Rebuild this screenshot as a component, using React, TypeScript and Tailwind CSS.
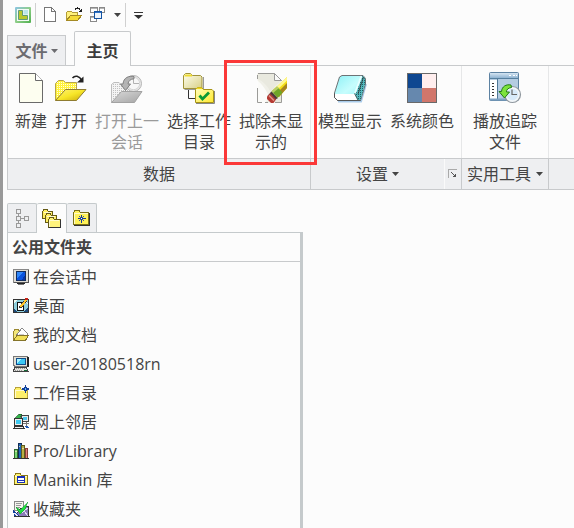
import { useState, type ReactNode } from 'react';

function Caret() {
  return (
    <svg viewBox="0 0 7 4" className="w-[7px] h-1 shrink-0" aria-hidden="true">
      <path d="M0 0H7L3.5 4Z" fill="currentColor" />
    </svg>
  );
}

function Icon32({ children }: { children: ReactNode }) {
  return <svg viewBox="0 0 32 32" className="w-8 h-8 shrink-0 overflow-visible" aria-hidden="true">{children}</svg>;
}

function Icon16({ children }: { children: ReactNode }) {
  return (
    <svg viewBox="0 0 16 16" className="w-4 h-4 shrink-0 overflow-visible" shapeRendering="crispEdges" aria-hidden="true">
      {children}
    </svg>
  );
}

/* ---- ribbon icons ---- */

const NewIcon = () => (
  <Icon32>
    <path d="M4.5 1.5H20.5L27.5 8.5V30.5H4.5Z" fill="#fdfef0" stroke="#6a6a6a" />
    <path d="M20.5 1.5V8.5H27.5" fill="#fff" stroke="#6a6a6a" />
  </Icon32>
);

const OpenIcon = () => (
  <Icon32>
    <defs>
      <linearGradient id="openFront" x1="0" y1="0" x2="1" y2="1">
        <stop offset="0" stopColor="#fff27a" />
        <stop offset="0.5" stopColor="#f7e628" />
        <stop offset="1" stopColor="#c9a80c" />
      </linearGradient>
      <pattern id="openDots" width="2" height="2" patternUnits="userSpaceOnUse">
        <rect width="2" height="2" fill="#fff23c" />
        <rect width="1" height="1" fill="#fffde0" />
      </pattern>
    </defs>
    <path d="M0.5 28.5V11.5L3.5 8.5H8.5L10.5 10.5H21.5V17" fill="url(#openDots)" stroke="#b5a44a" />
    <path d="M0.5 28.5L10.5 17.5H31L21.5 28.5Z" fill="url(#openFront)" stroke="#8f7c30" />
    <path d="M17.5 6C20 3 24 3.5 27 8.5" fill="none" stroke="#222" strokeWidth="1.5" />
    <path d="M28.5 4.5V10.5H22Z" fill="#222" />
  </Icon32>
);

const OpenLastIcon = () => (
  <Icon32>
    <defs>
      <linearGradient id="lastFront" x1="0" y1="0" x2="1" y2="1">
        <stop offset="0" stopColor="#d8d8d8" />
        <stop offset="1" stopColor="#a5a5a5" />
      </linearGradient>
      <pattern id="lastDots" width="2" height="2" patternUnits="userSpaceOnUse">
        <rect width="2" height="2" fill="#f4f4f4" />
        <rect width="1" height="1" fill="#c0c0c0" />
      </pattern>
    </defs>
    <path d="M0.5 30.5V12.5L3 10.5H8L10 12.5H22V20" fill="url(#lastDots)" stroke="#bdbdbd" />
    <circle cx="22.5" cy="11.5" r="8" fill="#e8e8e8" stroke="#b4b4b4" />
    <circle cx="22.5" cy="11.5" r="6.2" fill="#f7f7f7" stroke="#d4d4d4" />
    <path d="M22.5 6V11.5H28" fill="none" stroke="#b2b2b2" />
    <path d="M0.5 30.5L10.5 19.5H31L23.5 30.5Z" fill="url(#lastFront)" stroke="#a2a2a2" />
    <path d="M23 4.5C18 3.5 12.5 5.5 12 12H9.5L14.5 18.5L19.5 12H17C17.2 9 19.5 7 23 6.8Z" fill="#b4b4b4" stroke="#7f7f7f" />
  </Icon32>
);

const WorkDirIcon = () => (
  <Icon32>
    <defs>
      <linearGradient id="wdA" x1="0" y1="0" x2="1" y2="1">
        <stop offset="0" stopColor="#fffff0" />
        <stop offset="1" stopColor="#d8cf86" />
      </linearGradient>
      <linearGradient id="wdB" x1="0" y1="0" x2="1" y2="1">
        <stop offset="0" stopColor="#ffffc0" />
        <stop offset="1" stopColor="#ffe92e" />
      </linearGradient>
    </defs>
    <path d="M5.5 17V26.5H13" fill="none" stroke="#333" />
    <path d="M1.5 17.5H20.5V5" fill="none" stroke="#999" />
    <path d="M0.5 16.5V3.5L2.5 1.5H7.5L9.5 3.5H17.5L19 5V16.5Z" fill="url(#wdA)" stroke="#a0933a" />
    <path d="M1.5 3.5H9" stroke="#eedb30" strokeWidth="2" />
    <path d="M13 31.5H31.5V19" fill="none" stroke="#888" />
    <path d="M12.5 30.5V17.5L14.5 15.5H18.5L20.5 17.5H29L30.5 19V30.5Z" fill="url(#wdB)" stroke="#a79416" />
    <path d="M14.5 15.5H18.5L19.5 17H13Z" fill="#f2d81e" />
    <path d="M16.5 23.5L19.5 27L26 20.5" fill="none" stroke="#0b9a34" strokeWidth="2.8" />
  </Icon32>
);

const EraseIcon = () => (
  <Icon32>
    <path d="M2.5 1.5H19.5L26.5 8.5V30.5H2.5Z" fill="#f0f0e8" />
    <path d="M2.5 1.5V7C9 9 15 17 17 24L12 30.5H26.5V22L19 15L26 9V8.5L19.5 1.5Z" fill="#e9e9df" />
    <path d="M2 8C7 12 12 19 14 25L10 31H2Z" fill="#fff" opacity=".75" />
    <path d="M3 1.5H19.5L26.5 8.5M2.5 3V7M2.5 16V30.5H7M10 30.5H13M26.5 21V30.5H20" fill="none" stroke="#9b9b98" />
    <path d="M19.5 1.5V8.5H26.5Z" fill="#fafafa" stroke="#999" />
    <path d="M32 5L17 19L24 25L32 16Z" fill="#f5df18" />
    <path d="M32 5L17 19L19 20.7L32 8.5Z" fill="#fff890" />
    <path d="M32 11L21 22L24 25L32 16Z" fill="#a8851e" />
    <path d="M22 14.5L16.5 19.5L22.5 26L27.5 20.5Z" fill="#70a628" />
    <path d="M22 14.5L16.5 19.5L18 21L24 16Z" fill="#b9ce66" />
    <path d="M16.5 19.5L12.5 24L18 30L22.5 26Z" fill="#4d4444" />
    <path d="M15 21.5L12 24.5V27L16 31H18.5L21 27.5Z" fill="#b53a32" />
    <path d="M14 23.5L19 28.5" stroke="#e0978c" strokeWidth="1.5" />
    <path d="M16 20.5L22 26.5" stroke="#572828" />
  </Icon32>
);

const ModelIcon = () => (
  <Icon32>
    <defs>
      <linearGradient id="mdTop" x1="0" y1="0" x2="1" y2="1">
        <stop offset="0" stopColor="#8df1f6" />
        <stop offset="0.5" stopColor="#c6fdfd" />
        <stop offset="1" stopColor="#8ff4f8" />
      </linearGradient>
      <pattern id="mdSide" width="2" height="2" patternUnits="userSpaceOnUse">
        <rect width="2" height="2" fill="#55b9bd" />
        <rect width="1" height="1" fill="#1c6067" />
      </pattern>
    </defs>
    <path d="M4 29.5H27L32 12" fill="none" stroke="#a9cbea" strokeWidth="2" />
    <path d="M5.5 5L8 3.5H29L31.5 6.5V12L26.5 28.5H3.5L0.5 25.5V21Z" fill="url(#mdTop)" stroke="#6d7376" />
    <path d="M1 22H20.5L23 28H3.5L1 25.5Z" fill="#fff" />
    <path d="M27.5 4L21 21L24 28H26.5L31 12V6.5L29 4Z" fill="url(#mdSide)" />
    <path d="M27.5 4L21 21" stroke="#e6ffff" strokeWidth="2" />
    <path d="M20.5 21.5L24 28M29.5 5L24 22" stroke="#333" strokeWidth=".8" />
    <path d="M0.5 21.5V25.5L3.5 28.5H26.5" fill="none" stroke="#555" />
  </Icon32>
);

const ColorsIcon = () => (
  <Icon32>
    <rect x="1" y="1" width="30" height="30" fill="#696969" />
    <rect x="2" y="2" width="14" height="14" fill="#0e4791" />
    <rect x="16" y="2" width="14" height="14" fill="#ffeeee" />
    <rect x="2" y="16" width="14" height="14" fill="#6688ae" />
    <rect x="16" y="16" width="14" height="14" fill="#d1766b" />
  </Icon32>
);

const PlaybackIcon = () => (
  <Icon32>
    <defs>
      <linearGradient id="pbTop" x1="0" y1="0" x2="0" y2="1">
        <stop offset="0" stopColor="#d5e5f2" />
        <stop offset="1" stopColor="#8fb3d2" />
      </linearGradient>
    </defs>
    <rect x="0.5" y="0.5" width="29" height="28" rx="1" fill="#b4cce2" stroke="#5d82a2" />
    <rect x="1" y="1" width="28" height="5" fill="url(#pbTop)" />
    <path d="M1 6.5H29" stroke="#56809f" />
    <path d="M20 3.5H22M24 3.5H26M27 3.5H28" stroke="#fff" />
    <rect x="1" y="8" width="7" height="19" fill="#fff" />
    <path d="M8.5 7V28" stroke="#507897" />
    <path d="M3 11.5H6M3 14.5H6M3 17.5H6M3 20.5H6M3 23.5H6" stroke="#333" strokeDasharray="2 1" />
    <path d="M1 27.5H29" stroke="#7fa2c2" strokeWidth="2" />
    <circle cx="23.5" cy="22.5" r="8" fill="#f2f6f9" stroke="#8f979e" strokeWidth="1.2" />
    <circle cx="23.5" cy="22.5" r="5.8" fill="#d7eafa" />
    <path d="M23 17.5V22.5H28" fill="none" stroke="#666" strokeWidth="1.2" />
    <path d="M22 13C17 12 13 14.5 12.5 19.5H10L15.5 26L20.5 20H17.5C17.5 17.5 19 16 22.5 15.5Z" fill="#7ce33c" stroke="#237a18" />
  </Icon32>
);

/* ---- quick access icons ---- */

const LogoIcon = () => (
  <svg viewBox="0 0 17 17" className="w-[17px] h-[17px]" aria-hidden="true">
    <defs>
      <linearGradient id="logoEdge" x1="0" y1="0" x2="1" y2="1">
        <stop offset="0" stopColor="#8cc4e6" />
        <stop offset="0.5" stopColor="#8fce88" />
        <stop offset="1" stopColor="#4fb04f" />
      </linearGradient>
    </defs>
    <rect x="1" width="16" height="16" rx="1" fill="url(#logoEdge)" />
    <rect x="3" y="2" width="12" height="12" fill="#f4fbf6" />
    <path d="M4.5 3.5H8.5V8.5H13.5V12.5H4.5Z" fill="#b9c92c" stroke="#5f9a78" />
    <rect x="9.5" y="3" width="4.5" height="4.5" fill="#b9e6ea" />
  </svg>
);

const SmallDocIcon = () => (
  <Icon16>
    <path d="M2.5 0.5H9.5L13.5 4.5V14.5H2.5Z" fill="#fff" stroke="#777" />
    <path d="M9.5 0.5V4.5H13.5" fill="none" stroke="#777" />
  </Icon16>
);

const SmallOpenIcon = () => (
  <Icon16>
    <path d="M0.5 13.5V5.5L2 4.5H5L6.5 5.5H11.5V8" fill="#fff17c" stroke="#b39c36" />
    <path d="M0.5 13.5L4.5 8.5H15.5L11.5 13.5Z" fill="#f5db37" stroke="#a58a24" />
    <path d="M9 2.5C11 0 13 1 14.5 3.5" fill="none" stroke="#222" strokeWidth="1.2" />
    <path d="M16 1V5H12Z" fill="#222" />
  </Icon16>
);

const WindowsIcon = () => (
  <Icon16>
    <g fill="#fff" stroke="#8a8a8a">
      <rect x="0.5" y="0.5" width="7" height="5" />
      <rect x="9.5" y="0.5" width="5" height="5" />
      <rect x="0.5" y="9.5" width="6" height="5" />
    </g>
    <path d="M1 1.5H7M10 1.5H14M1 10.5H6" stroke="#b5b5b5" />
    <rect x="4.5" y="4.5" width="7" height="7" fill="#eef5fd" stroke="#1554a3" />
    <path d="M5 5.5H11" stroke="#2f74c8" />
  </Icon16>
);

/* ---- navigator icons ---- */

const TreeIcon = () => (
  <svg viewBox="0 0 14 20" className="w-3.5 h-5" shapeRendering="crispEdges" aria-hidden="true">
    <g fill="none" stroke="#999">
      <rect x="1.5" y="1.5" width="4" height="4" />
      <rect x="1.5" y="8.5" width="4" height="4" />
      <rect x="9.5" y="8.5" width="4" height="4" />
      <rect x="1.5" y="15.5" width="4" height="4" />
      <path d="M3.5 6V8M3.5 13V15M6 10.5H9" />
    </g>
  </svg>
);

const FoldersIcon = () => (
  <svg viewBox="0 0 19 19" className="w-[19px] h-[19px]" shapeRendering="crispEdges" aria-hidden="true">
    <g fill="#ffef61" stroke="#665b16">
      <path d="M0.5 9.5V2.5L2 0.5H5L6.5 2.5H10.5V9.5Z" />
      <path d="M3.5 13.5V6.5L5 4.5H8L9.5 6.5H14.5V13.5Z" />
      <path d="M6.5 18.5V10.5L8 8.5H11L12.5 10.5H18V18.5Z" fill="#fff37c" />
    </g>
    <path d="M2 3.5H9M5 7.5H13M8 11.5H17M7.5 11V18" stroke="#fffbd0" />
    <path d="M18.5 11V18.5H7" fill="none" stroke="#333" />
  </svg>
);

const FavFolderIcon = () => (
  <svg viewBox="0 0 17 16" className="w-[17px] h-4" shapeRendering="crispEdges" aria-hidden="true">
    <path d="M0.5 14.5V2.5L2 0.5H6L7.5 2.5H15.5V14.5Z" fill="#fff259" stroke="#7c7116" />
    <path d="M1 3.5H15M1.5 4V14" stroke="#fffbc8" />
    <path d="M16.5 3V15.5H1" fill="none" stroke="#333" />
    <path d="M8.5 5V13M4.5 8.5H12.5" stroke="#123a9c" />
    <path d="M6 6L11 11M11 6L6 11" stroke="#123a9c" strokeWidth=".8" />
    <rect x="8" y="8" width="1" height="1" fill="#fff" />
  </svg>
);

const MonitorIcon = () => (
  <Icon16>
    <rect x="0.5" y="0.5" width="15" height="13" fill="#dedcd6" stroke="#888" />
    <path d="M15.5 1V13.5H1" fill="none" stroke="#555" />
    <rect x="3.5" y="2.5" width="9" height="9" fill="#0a54df" stroke="#142d5c" />
    <path d="M4 3H10L4 10Z" fill="#2f86fa" />
    <path d="M9 11L12 6V11Z" fill="#0735a6" />
    <path d="M4 14.5H12" stroke="#222" />
    <path d="M5 15.5H11" stroke="#777" />
  </Icon16>
);

const DesktopIcon = () => (
  <Icon16>
    <rect x="0.5" y="1.5" width="15" height="13" fill="#8fcfdd" stroke="#333" />
    <path d="M1 2H4L1 6ZM10 2H14L15 7Z" fill="#f2fbf4" />
    <path d="M11 14L15 9V14ZM1 11L4 14H1Z" fill="#1d4a7c" />
    <path d="M4.5 4.5H9.5L10.5 7.5V12.5H4.5Z" fill="#fff" stroke="#111" />
    <path d="M7 10L13 2" stroke="#333" strokeWidth="3" />
    <path d="M7.5 9L13 2" stroke="#ffc629" strokeWidth="2" />
    <rect x="12" y="0" width="3" height="2" fill="#c42418" />
  </Icon16>
);

const DocumentsIcon = () => (
  <Icon16>
    <path d="M0.5 13.5V4.5L2 2.5H5L6.5 4.5H12.5V8" fill="#f3e779" stroke="#9b8830" />
    <path d="M3 9L9 1L15 7L12 12Z" fill="#fff" stroke="#888" />
    <path d="M6 7H11M6 9H12" stroke="#ccc" />
    <path d="M0.5 13.5L4 8.5H15.5L12.5 13.5Z" fill="#f1df56" stroke="#85742a" />
  </Icon16>
);

const ComputerIcon = () => (
  <Icon16>
    <path d="M1 0.5H14L15.5 2V10.5H2L0.5 9Z" fill="#e2dfd4" stroke="#777" />
    <path d="M14.5 1V11" stroke="#222" strokeWidth="2" />
    <rect x="3.5" y="2.5" width="9" height="6" fill="#3cc8f4" stroke="#134c8a" />
    <path d="M4 3H8L4 7Z" fill="#a8f3ff" />
    <path d="M1.5 11.5H13L15.5 15.5H0.5Z" fill="#e4e4de" stroke="#444" />
    <path d="M3 12.5H12M2 14.5H9" stroke="#999" strokeDasharray="1 1" />
    <path d="M11 14.5H14" stroke="#116b35" />
  </Icon16>
);

const WorkFolderIcon = () => (
  <Icon16>
    <path d="M1.5 13.5V4.5L3 2.5H7L8.5 4.5H14.5V13.5Z" fill="#fff06b" stroke="#b8a23a" />
    <path d="M2 5.5H14M2.5 6V13" stroke="#fffbd1" />
    <path d="M1 13.5H15" stroke="#554b18" />
    <path d="M12.5 0L14 2.5L16.5 4L14 5.5L12.5 8L11 5.5L8.5 4L11 2.5Z" fill="#143e9a" />
    <rect x="12" y="3" width="1" height="2" fill="#64c9ff" />
  </Icon16>
);

const NetworkIcon = () => (
  <Icon16>
    <path d="M2 4L6 0H9L7 4L4 5Z" fill="#35b34a" stroke="#145724" strokeWidth=".7" />
    <rect x="8.5" y="1.5" width="7" height="6" fill="#e8e8e8" stroke="#444" />
    <rect x="10" y="3" width="4" height="3" fill="#4cc6ee" />
    <rect x="1.5" y="4.5" width="8" height="7" fill="#ededea" stroke="#333" />
    <rect x="3" y="6" width="5" height="4" fill="#3cc8f0" />
    <path d="M10 9.5H16M13 8V12" stroke="#777" />
    <path d="M0.5 14.5L2 12.5H10L11.5 14.5Z" fill="#eee" stroke="#333" />
    <path d="M12 12.5H15M13 13.5H16" stroke="#1c55b2" />
  </Icon16>
);

const LibraryIcon = () => (
  <Icon16>
    <rect x="1.5" y="6.5" width="3" height="9" fill="#7cd873" stroke="#2f6a2e" />
    <rect x="5" y="0.5" width="3" height="15" fill="#1f67b8" stroke="#132c55" />
    <rect x="8.5" y="2.5" width="3" height="13" fill="#b8b046" stroke="#5e5c1e" />
    <rect x="12.5" y="5.5" width="2" height="10" fill="#e08377" stroke="#8a4038" />
    <path d="M2 8H4M9 5H11M6 3H7" stroke="#e8dfb5" strokeWidth=".8" />
    <path d="M0 15.5H16" stroke="#333" />
  </Icon16>
);

const ManikinIcon = () => (
  <Icon16>
    <path d="M1.5 12.5V3.5L3 1.5H7L8.5 3.5H14.5V12.5Z" fill="#fff474" stroke="#8d7916" />
    <path d="M2 4.5H14" stroke="#fffcd8" />
    <path d="M1 12.5H15" stroke="#51470f" />
    <rect x="4.5" y="4.5" width="7" height="6" fill="#fff" stroke="#1830b8" />
    <path d="M4 5.5H12M5 8.5H11" stroke="#1830b8" />
  </Icon16>
);

const FavoritesIcon = () => (
  <Icon16>
    <rect x="1.5" y="0.5" width="9" height="9" fill="#f4f4ee" stroke="#888" />
    <path d="M3 2.5H9M3 4.5H8M3 6.5H7" stroke="#999" />
    <path d="M2 15L7 8L15 5L16 15Z" fill="#8a7cb8" stroke="#333" />
    <path d="M7 13L15 7M11 10L15 15" stroke="#e0d8f2" />
    <path d="M3 6L7 9L15 1L12 8L7 13Z" fill="#1ee03c" stroke="#18a033" strokeWidth=".6" />
    <path d="M0 9L7 15H1Z" fill="#143f9c" />
    <path d="M1 12L5 15" stroke="#e8e8ff" />
  </Icon16>
);

interface RibbonButtonProps {
  icon: ReactNode;
  lines: string[];
  disabled?: boolean;
  highlighted?: boolean;
}

function RibbonButton({ icon, lines, disabled, highlighted }: RibbonButtonProps) {
  return (
    <button
      type="button"
      disabled={disabled}
      className={`relative flex flex-col items-center justify-start pt-1.5 leading-[21px] ${disabled ? 'text-[#9a9a9a]' : ''}`}
    >
      {icon}
      <span className="mt-[7px] flex flex-col whitespace-nowrap">
        {lines.map((line) => (
          <span key={line}>{line}</span>
        ))}
      </span>
      {highlighted && <span className="absolute -top-1.5 -left-[15px] -right-[14px] h-[105px] border-3 border-[#fb3838] z-10" />}
    </button>
  );
}

function RibbonGroup({ children, footer }: { children: ReactNode; footer: ReactNode }) {
  return (
    <section className="flex flex-col shrink-0">
      <div className="flex justify-center gap-2 px-[7px] h-[92px] border-r border-[#e6e7e8]">{children}</div>
      <div className="flex h-8 bg-[#eeeff1] border-y border-r border-[#c8cacc]">{footer}</div>
    </section>
  );
}

const places = [
  { label: '在会话中', icon: <MonitorIcon /> },
  { label: '桌面', icon: <DesktopIcon /> },
  { label: '我的文档', icon: <DocumentsIcon /> },
  { label: 'user-20180518rn', icon: <ComputerIcon /> },
  { label: '工作目录', icon: <WorkFolderIcon /> },
  { label: '网上邻居', icon: <NetworkIcon /> },
  { label: 'Pro/Library', icon: <LibraryIcon /> },
  { label: 'Manikin 库', icon: <ManikinIcon /> },
  { label: '收藏夹', icon: <FavoritesIcon /> },
];

const navTabs = [
  { id: 'tree', label: '模型树', icon: <TreeIcon /> },
  { id: 'folders', label: '文件夹浏览器', icon: <FoldersIcon /> },
  { id: 'favorites', label: '收藏夹', icon: <FavFolderIcon /> },
];

export default function App() {
  const [navTab, setNavTab] = useState('folders');

  return (
    <div className="min-h-screen flex flex-col overflow-hidden bg-[#fcfcfc] border-l-3 border-[#999] pl-1 text-base text-[#444] font-['Open_Sans','Noto_Sans_CJK_SC',sans-serif]">
      <header className="h-[30px] shrink-0 flex items-center pl-[7px]">
        <button type="button" aria-label="Creo"><LogoIcon /></button>
        <span className="w-px h-6 bg-[#d0d0d0] ml-1 mr-1.5" />
        <div className="flex items-center gap-2">
          <button type="button" aria-label="新建"><SmallDocIcon /></button>
          <button type="button" aria-label="打开"><SmallOpenIcon /></button>
          <button type="button" aria-label="窗口"><WindowsIcon /></button>
          <button type="button" aria-label="窗口列表"><Caret /></button>
        </div>
        <span className="w-px h-6 bg-[#d0d0d0] ml-1 mr-2" />
        <button type="button" aria-label="自定义快速访问工具栏">
          <svg viewBox="0 0 9 7" className="w-[9px] h-[7px]" aria-hidden="true">
            <path d="M0 0H9V1H0ZM0 3H9L4.5 7Z" fill="#333" />
          </svg>
        </button>
      </header>

      <nav className="flex items-end shrink-0 gap-2 pt-px relative">
        <button type="button" className="h-[30px] w-[59px] flex items-center justify-center gap-[3px] bg-[#eeeff1] border border-b-0 border-[#c8cacc] font-bold text-[#6c6c70]">
          文件 <Caret />
        </button>
        <button type="button" className="h-[35px] w-[57px] pt-1 -mb-px flex items-center justify-center bg-[#fcfcfc] border border-b-0 border-[#c8cacc] rounded-t-xs font-bold text-[#3c3c3c]">
          主页
        </button>
      </nav>

      <div className="flex shrink-0 border-t border-l border-[#c8cacc]">
        <RibbonGroup footer={<span className="m-auto">数据</span>}>
          <RibbonButton icon={<NewIcon />} lines={['新建']} />
          <RibbonButton icon={<OpenIcon />} lines={['打开']} />
          <RibbonButton icon={<OpenLastIcon />} lines={['打开上一', '会话']} disabled />
          <RibbonButton icon={<WorkDirIcon />} lines={['选择工作', '目录']} />
          <RibbonButton icon={<EraseIcon />} lines={['拭除未显', '示的']} highlighted />
        </RibbonGroup>
        <RibbonGroup
          footer={
            <>
              <button type="button" className="flex-1 flex items-center justify-center gap-1">设置 <Caret /></button>
              <button type="button" aria-label="设置对话框" className="w-[17px] flex items-center justify-center border-l border-[#fafafa]">
                <svg viewBox="0 0 10 10" className="w-2.5 h-2.5" shapeRendering="crispEdges" aria-hidden="true">
                  <path d="M0.5 9V0.5H9" fill="none" stroke="#aaa" />
                  <path d="M3 3L7 7" stroke="#555" />
                  <path d="M8 4V8H4Z" fill="#555" />
                </svg>
              </button>
            </>
          }
        >
          <RibbonButton icon={<ModelIcon />} lines={['模型显示']} />
          <RibbonButton icon={<ColorsIcon />} lines={['系统颜色']} />
        </RibbonGroup>
        <RibbonGroup
          footer={<button type="button" className="px-[5px] flex items-center gap-[5px] whitespace-nowrap">实用工具 <Caret /></button>}
        >
          <RibbonButton icon={<PlaybackIcon />} lines={['播放追踪', '文件']} />
        </RibbonGroup>
        <div className="flex-1 flex flex-col justify-end">
          <div className="h-8 bg-[#eeeff1] border-y border-[#c8cacc]" />
        </div>
      </div>

      <aside className="mt-[13px] w-74 flex-1 flex flex-col">
        <div className="flex relative" role="tablist">
          {navTabs.map((tab) => (
            <button
              key={tab.id}
              type="button"
              role="tab"
              aria-label={tab.label}
              aria-selected={navTab === tab.id}
              onClick={() => setNavTab(tab.id)}
              className={`w-[30px] flex items-center justify-center border border-b-0 border-[#c5cacc] not-first:border-l-0 rounded-t-xs ${
                navTab === tab.id ? 'h-[30px] -mb-px bg-[#fcfcfc]' : 'h-[29px] bg-[#eeeff1]'
              }`}
            >
              {tab.icon}
            </button>
          ))}
        </div>
        <div className="flex-1 border-t border-l border-r-3 border-[#c5cacc]">
          <h2 className="h-[29px] leading-[28px] pl-1 border-b border-[#c8cacc] font-bold">公用文件夹</h2>
          <ul>
            {places.map((place) => (
              <li key={place.label}>
                <a href="#" className="h-[29px] flex items-center gap-1 pl-[5px]">
                  {place.icon}
                  <span>{place.label}</span>
                </a>
              </li>
            ))}
          </ul>
        </div>
      </aside>
    </div>
  );
}
